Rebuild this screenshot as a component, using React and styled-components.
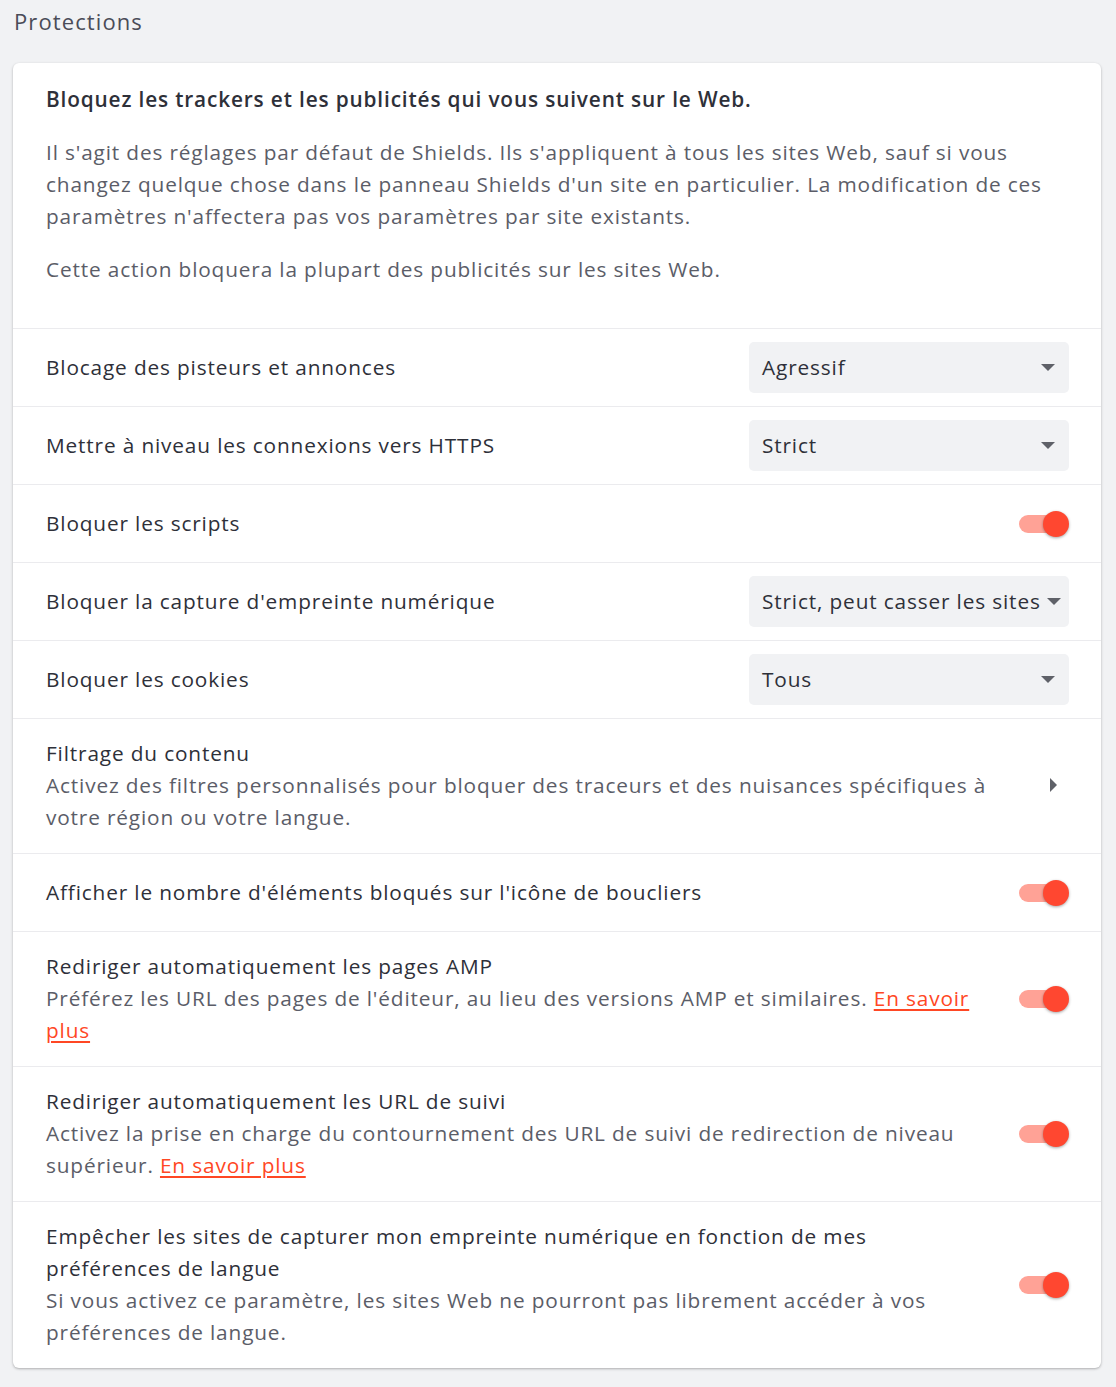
import styled, {createGlobalStyle} from "styled-components";

const GlobalStyle = createGlobalStyle`
  body {
    margin: 0;
    background: #f1f2f4;
    font-family: 'Open Sans', 'Liberation Sans', sans-serif;
    letter-spacing: 0.85px;
  }
`;

const Page = styled.div`
  padding: 5px 15px 19px 13px;
`;

const Heading = styled.h2`
  margin: 0 0 26px 1px;
  font-size: 22px;
  line-height: 32px;
  font-weight: 400;
  letter-spacing: 1.1px;
  color: #4a4c58;
`;

const Card = styled.div`
  background: #fff;
  border-radius: 6px;
  box-shadow: 0 1px 3px rgba(0, 0, 0, 0.22), 0 1px 2px rgba(0, 0, 0, 0.08);
`;

const Intro = styled.div`
  padding: 20px 32px 43px 33px;
`;

const IntroTitle = styled.div`
  font-size: 20.8px;
  line-height: 32px;
  font-weight: 600;
  color: #2e3039;
`;

const Para = styled.p`
  margin: 21px 0 0;
  font-size: 20.8px;
  line-height: 32px;
  color: #5b5d68;
`;

const Row = styled.div`
  display: flex;
  align-items: center;
  box-sizing: border-box;
  min-height: 78px;
  padding: 18px 32px 20px 33px;
  border-top: 1px solid #ebebee;
`;

const Text = styled.div`
  flex: 1;
  padding-right: ${p => p.$gap || 0}px;
`;

const Label = styled.div`
  font-size: 20.8px;
  line-height: 32px;
  color: #2e3039;
`;

const Desc = styled.div`
  font-size: 20.8px;
  line-height: 32px;
  color: #5b5d68;
`;

const Link = styled.a`
  color: #ff4724;
  text-decoration: underline;
  text-underline-offset: 3px;
  text-decoration-thickness: 1.5px;
`;

const SelectBox = styled.div`
  width: 320px;
  height: 51px;
  margin: -12px 0 -14px;
  box-sizing: border-box;
  display: flex;
  align-items: center;
  justify-content: space-between;
  padding: 0 14px 2px 13px;
  border-radius: 5px;
  background: #f1f2f4;
  font-size: 20.8px;
  color: #2e3039;
  white-space: nowrap;
`;

const Caret = styled.span`
  width: 0;
  height: 0;
  border-left: 7.5px solid transparent;
  border-right: 7.5px solid transparent;
  border-top: 7px solid #5f6168;
  margin: 2px 0 0 6px;
`;

const Toggle = styled.div`
  position: relative;
  width: 50px;
  height: 26px;
  flex-shrink: 0;
  margin-top: 2px;
`;

const Track = styled.span`
  position: absolute;
  left: 0;
  top: 4px;
  width: 42px;
  height: 18px;
  border-radius: 9px;
  background: #ffa296;
`;

const Knob = styled.span`
  position: absolute;
  right: 0;
  top: 0;
  width: 26px;
  height: 26px;
  border-radius: 50%;
  background: #ff4730;
  box-shadow: 0 1px 3px rgba(0, 0, 0, 0.35);
`;

const Chevron = styled.span`
  width: 32px;
  display: flex;
  justify-content: center;
  flex-shrink: 0;

  &::after {
    content: "";
    border-top: 7px solid transparent;
    border-bottom: 7px solid transparent;
    border-left: 7px solid #5f6168;
  }
`;

const Select = ({value}) => (
    <SelectBox>
        {value}
        <Caret/>
    </SelectBox>
);

const Switch = () => (
    <Toggle>
        <Track/>
        <Knob/>
    </Toggle>
);

const App = () => {
    return (
        <Page>
            <GlobalStyle/>
            <Heading>Protections</Heading>
            <Card>
                <Intro>
                    <IntroTitle>Bloquez les trackers et les publicités qui vous suivent sur le Web.</IntroTitle>
                    <Para>
                        Il s'agit des réglages par défaut de Shields. Ils s'appliquent à tous les sites Web, sauf si vous
                        changez quelque chose dans le panneau Shields d'un site en particulier. La modification de ces
                        paramètres n'affectera pas vos paramètres par site existants.
                    </Para>
                    <Para>Cette action bloquera la plupart des publicités sur les sites Web.</Para>
                </Intro>

                <Row>
                    <Text><Label>Blocage des pisteurs et annonces</Label></Text>
                    <Select value="Agressif"/>
                </Row>
                <Row>
                    <Text><Label>Mettre à niveau les connexions vers HTTPS</Label></Text>
                    <Select value="Strict"/>
                </Row>
                <Row>
                    <Text><Label>Bloquer les scripts</Label></Text>
                    <Switch/>
                </Row>
                <Row>
                    <Text><Label>Bloquer la capture d'empreinte numérique</Label></Text>
                    <Select value="Strict, peut casser les sites"/>
                </Row>
                <Row>
                    <Text><Label>Bloquer les cookies</Label></Text>
                    <Select value="Tous"/>
                </Row>
                <Row>
                    <Text $gap={40}>
                        <Label>Filtrage du contenu</Label>
                        <Desc>Activez des filtres personnalisés pour bloquer des traceurs et des nuisances spécifiques à
                            votre région ou votre langue.</Desc>
                    </Text>
                    <Chevron/>
                </Row>
                <Row>
                    <Text><Label>Afficher le nombre d'éléments bloqués sur l'icône de boucliers</Label></Text>
                    <Switch/>
                </Row>
                <Row>
                    <Text $gap={36}>
                        <Label>Rediriger automatiquement les pages AMP</Label>
                        <Desc>Préférez les URL des pages de l'éditeur, au lieu des versions AMP et similaires.{" "}
                            <Link href="#">En savoir plus</Link></Desc>
                    </Text>
                    <Switch/>
                </Row>
                <Row>
                    <Text $gap={36}>
                        <Label>Rediriger automatiquement les URL de suivi</Label>
                        <Desc>Activez la prise en charge du contournement des URL de suivi de redirection de niveau
                            supérieur. <Link href="#">En savoir plus</Link></Desc>
                    </Text>
                    <Switch/>
                </Row>
                <Row>
                    <Text $gap={36}>
                        <Label>Empêcher les sites de capturer mon empreinte numérique en fonction de mes préférences de
                            langue</Label>
                        <Desc>Si vous activez ce paramètre, les sites Web ne pourront pas librement accéder à vos
                            préférences de langue.</Desc>
                    </Text>
                    <Switch/>
                </Row>
            </Card>
        </Page>
    )
}

export default App;
